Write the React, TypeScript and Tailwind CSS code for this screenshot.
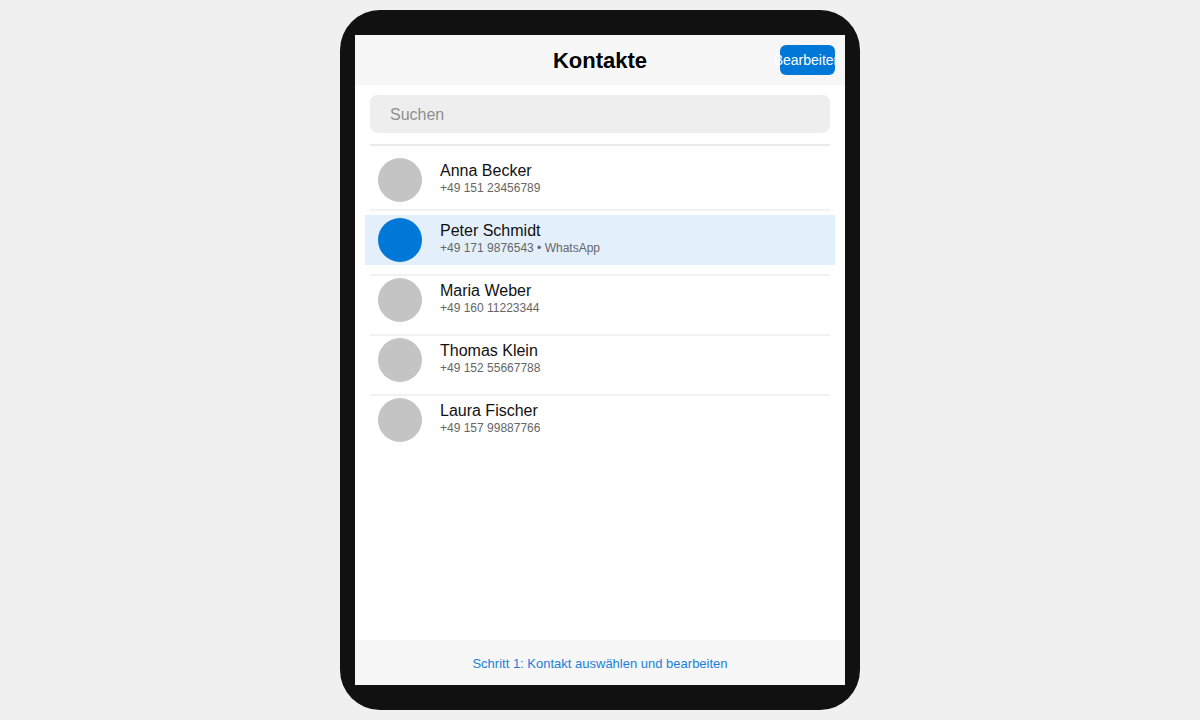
const contacts: {
  name: string;
  phone: string;
  selected?: boolean;
  pt: string;
  pb: string;
}[] = [
  { name: "Anna Becker", phone: "+49 151 23456789", pt: "pt-[12px]", pb: "pb-[7px]" },
  { name: "Peter Schmidt", phone: "+49 171 9876543 • WhatsApp", selected: true, pt: "", pb: "" },
  { name: "Maria Weber", phone: "+49 160 11223344", pt: "pt-[2px]", pb: "pb-[12px]" },
  { name: "Thomas Klein", phone: "+49 152 55667788", pt: "pt-[2px]", pb: "pb-[12px]" },
  { name: "Laura Fischer", phone: "+49 157 99887766", pt: "pt-[2px]", pb: "pb-[12px]" },
];

function ContactText({ name, phone }: { name: string; phone: string }) {
  return (
    <div className="ml-[18px] flex flex-col pb-[4px]">
      <span className="text-[16px] leading-[19px] text-[#111]">{name}</span>
      <span className="text-[12px] leading-[16px] text-[#666]">{phone}</span>
    </div>
  );
}

export default function App() {
  return (
    <div
      className="flex h-screen w-full items-center justify-center bg-[#f0f0f0]"
      style={{ fontFamily: '"Liberation Sans", Arial, sans-serif' }}
    >
      <div className="h-[700px] w-[520px] rounded-[40px] bg-[#111111] px-[15px] py-[25px]">
        <div className="flex h-full flex-col bg-white">
          {/* header */}
          <header className="relative flex h-[50px] shrink-0 items-center justify-center bg-[#f7f7f7]">
            <h1 className="text-[22px] font-bold text-black">Kontakte</h1>
            <button className="absolute right-[10px] top-[10px] flex h-[30px] w-[55px] items-center justify-center rounded-[6px] bg-[#0078d7] text-[14px] whitespace-nowrap text-white">
              Bearbeiten
            </button>
          </header>

          {/* content */}
          <main className="flex-1 px-[15px] pt-[10px]">
            <div className="flex h-[38px] items-center rounded-[8px] bg-[#eeeeee] pl-5 pt-[2px] text-[16px] text-[#8e8e8e]">
              Suchen
            </div>
            <div className="mt-[11px] h-[2px] bg-[#ebebeb]" />

            {contacts.map((c, i) =>
              c.selected ? (
                <div key={c.name} className="mt-[4px] mb-[9px]">
                  <div className="-mx-[5px] flex items-center bg-[#e3f0fc] py-[3px] pl-[13px]">
                    <div className="h-[44px] w-[44px] shrink-0 rounded-full bg-[#0078d7]" />
                    <ContactText name={c.name} phone={c.phone} />
                  </div>
                </div>
              ) : (
                <div key={c.name}>
                  {i > 1 && <div className="h-[2px] bg-[#f2f2f2]" />}
                  <div className={`flex items-center pl-2 ${c.pt} ${c.pb}`}>
                    <div className="h-[44px] w-[44px] shrink-0 rounded-full bg-[#c4c4c4]" />
                    <ContactText name={c.name} phone={c.phone} />
                  </div>
                  {i === 0 && <div className="h-[2px] bg-[#f2f2f2]" />}
                </div>
              )
            )}
          </main>

          {/* footer */}
          <footer className="flex h-[45px] shrink-0 items-center justify-center bg-[#f7f7f7] pt-[2px] text-[13px] text-[#1a7fd6]">
            Schritt 1: Kontakt auswählen und bearbeiten
          </footer>
        </div>
      </div>
    </div>
  );
}
